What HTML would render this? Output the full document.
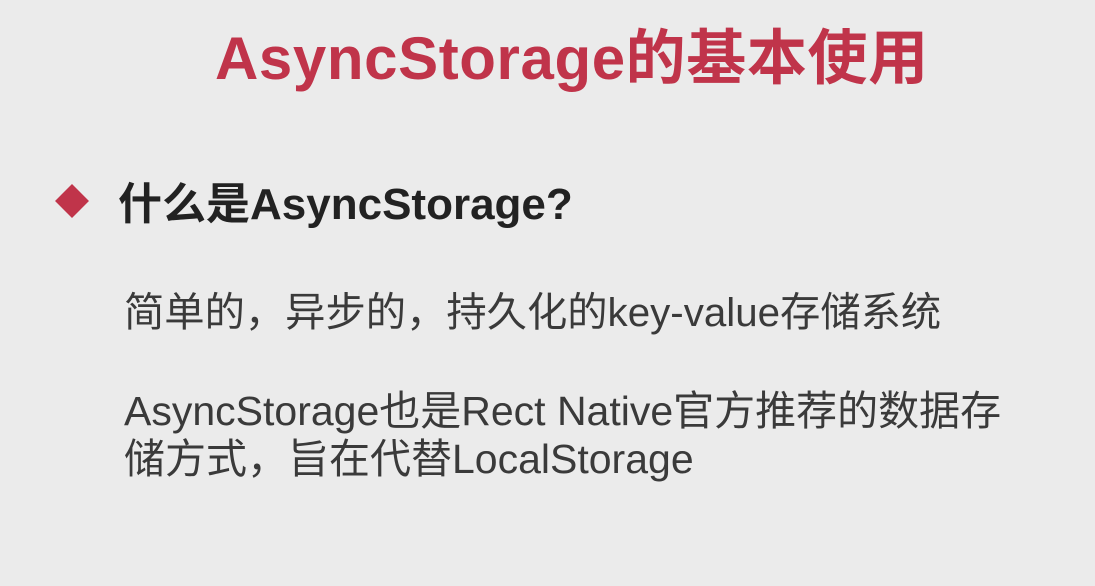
<!DOCTYPE html>
<html><head><meta charset="utf-8"><style>
html,body{margin:0;padding:0}
body{width:1095px;height:586px;background:#ebebeb;position:relative;overflow:hidden;font-family:"Liberation Sans","Noto Sans CJK SC",sans-serif}
div{position:absolute;white-space:nowrap}
.t{left:215px;top:24px;font-size:60px;font-weight:bold;color:#c0344a;line-height:70px;letter-spacing:0.6px}
.h{left:118px;top:179px;font-size:44px;font-weight:bold;color:#222;line-height:52px}
.d{left:60px;top:189px;width:24px;height:24px;background:#c0344a;transform:rotate(45deg)}
.b{left:124px;font-size:41px;color:#3a3a3a;line-height:48px}
</style></head><body>
<div class="t">AsyncStorage的基本使用</div>
<div class="d"></div>
<div class="h">什么是AsyncStorage?</div>
<div class="b" style="top:289px;font-size:40.3px">简单的，异步的，持久化的key-value存储系统</div>
<div class="b" style="top:387px">AsyncStorage也是Rect Native官方推荐的数据存</div>
<div class="b" style="top:435px">储方式，旨在代替LocalStorage</div>
</body></html>
